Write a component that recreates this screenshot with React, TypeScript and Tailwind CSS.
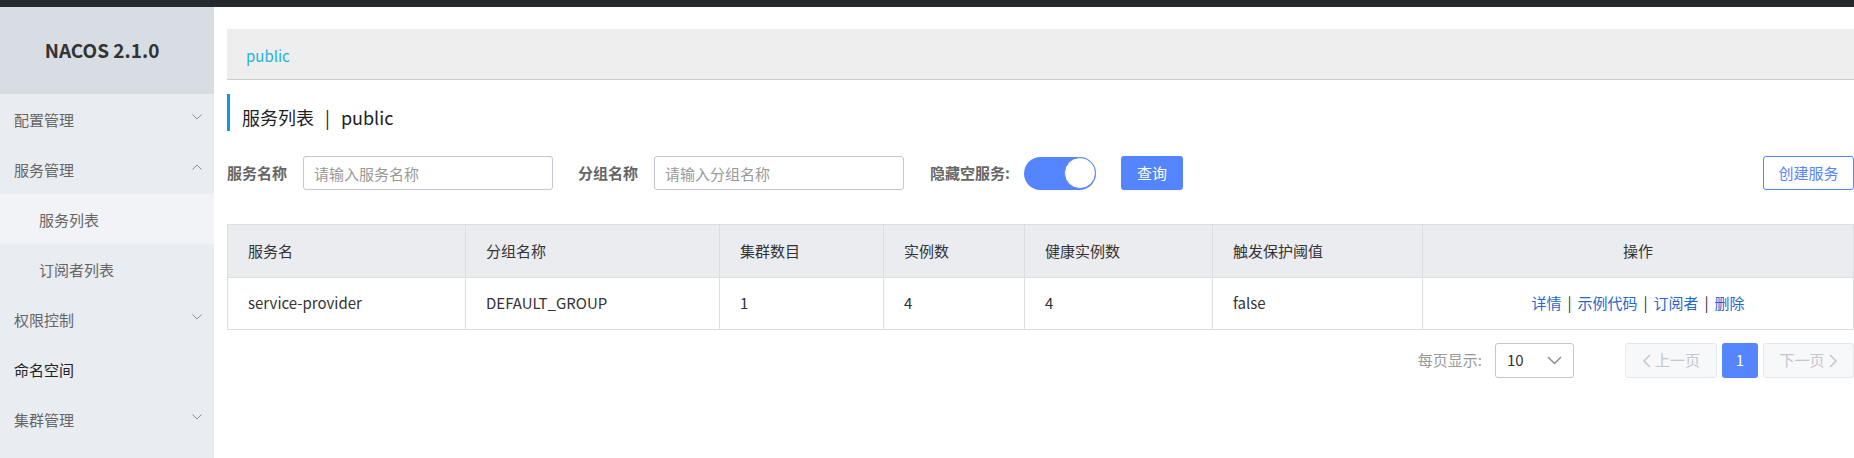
import React from 'react';

const FONT = '"Noto Sans CJK SC", "Noto Sans", sans-serif';

const Chevron = ({ up = false }: { up?: boolean }) => (
  <svg width="10" height="6" viewBox="0 0 10 6" className="text-[#8a8f99]">
    <path d={up ? 'M0.5 5.5 L5 1 L9.5 5.5' : 'M0.5 0.5 L5 5 L9.5 0.5'} fill="none" stroke="currentColor" strokeWidth="1" />
  </svg>
);

const menu = [
  { label: '配置管理', arrow: 'down' },
  { label: '服务管理', arrow: 'up' },
  { label: '服务列表', sub: true, active: true },
  { label: '订阅者列表', sub: true },
  { label: '权限控制', arrow: 'down' },
  { label: '命名空间', dark: true },
  { label: '集群管理', arrow: 'down' },
];

const Sidebar = () => (
  <aside className="w-[214px] shrink-0 bg-[#e9ecf1] self-stretch">
    <div className="h-[87px] bg-[#d8dde4] flex items-center justify-center text-[19px] font-bold text-[#333] pr-[10px]">
      NACOS 2.1.0
    </div>
    {menu.map((m) => (
      <div
        key={m.label}
        className={`h-[50px] flex items-center justify-between text-[15px] pt-[3px] ${m.sub ? 'pl-[39px]' : 'pl-[14px]'} pr-[12px] ${m.active ? 'bg-[#f2f3f7]' : ''} ${m.dark ? 'text-[#222]' : 'text-[#666]'}`}
      >
        <span>{m.label}</span>
        {m.arrow && (
          <span className="-mt-[7px]">
            <Chevron up={m.arrow === 'up'} />
          </span>
        )}
      </div>
    ))}
  </aside>
);

const cols = [
  { t: '服务名', w: 238 },
  { t: '分组名称', w: 254 },
  { t: '集群数目', w: 164 },
  { t: '实例数', w: 141 },
  { t: '健康实例数', w: 188 },
  { t: '触发保护阈值', w: 210 },
];

const row = ['service-provider', 'DEFAULT_GROUP', '1', '4', '4', 'false'];

const Input = ({ ph }: { ph: string }) => (
  <input
    placeholder={ph}
    className="w-[250px] h-[34px] border border-[#c4c6cf] rounded-[3px] px-[10px] text-[15px] placeholder:text-[#999] outline-none"
    style={{ fontFamily: FONT }}
  />
);

const Sep = () => <span className="mx-[6px] text-[#333]">|</span>;

export default function App() {
  return (
    <div className="w-[1854px] h-[458px] overflow-hidden bg-white flex flex-col" style={{ fontFamily: FONT }}>
      <div className="h-[7px] bg-[#24292e] shrink-0" />
      <div className="flex flex-1 min-h-0">
        <Sidebar />
        <main className="flex-1 pl-[13px] pt-[22px] flex flex-col">
          <div className="h-[51px] bg-[#eeeeee] border-b border-[#cccccc] flex items-center pl-[19px] pt-[4px] text-[15px] text-[#1fb3d9]">
            public
          </div>

          <div className="mt-[14px] h-[37px] border-l-[3px] border-[#0c9bd4] pl-[12px] pt-[10px] flex items-center text-[18px] text-[#222]">
            <span>服务列表</span>
            <span className="mx-[11px]">|</span>
            <span>public</span>
          </div>

          <div className="mt-[25px] flex items-center h-[34px] text-[15px]">
            <span className="font-bold text-[#666]">服务名称</span>
            <span className="ml-[16px]"><Input ph="请输入服务名称" /></span>
            <span className="ml-[25px] font-bold text-[#666]">分组名称</span>
            <span className="ml-[16px]"><Input ph="请输入分组名称" /></span>
            <span className="ml-[26px] font-bold text-[#666]">隐藏空服务:</span>
            <div className="ml-[14px] w-[72px] h-[33px] rounded-full bg-[#5584ff] flex items-center justify-end">
              <div className="w-[32px] h-[32px] rounded-full bg-white border border-[#5584ff]" />
            </div>
            <button className="ml-[25px] w-[62px] h-[34px] rounded-[3px] bg-[#5584ff] text-white text-[15px]">查询</button>
            <button className="ml-auto w-[91px] h-[34px] rounded-[3px] border border-[#5584ff] text-[#5584ff] text-[15px] bg-white">
              创建服务
            </button>
          </div>

          <table className="mt-[34px] w-full border-collapse border border-[#dcdee3] text-[15px] table-fixed">
            <colgroup>
              {cols.map((c) => (
                <col key={c.t} style={{ width: c.w }} />
              ))}
              <col />
            </colgroup>
            <thead>
              <tr className="h-[53px] bg-[#ebecf0] text-[#333]">
                {cols.map((c) => (
                  <th key={c.t} className="font-normal text-left pl-[20px] border-r border-b border-[#dcdee3]">
                    {c.t}
                  </th>
                ))}
                <th className="font-normal text-center border-b border-[#dcdee3]">操作</th>
              </tr>
            </thead>
            <tbody>
              <tr className="h-[52px] text-[#333]">
                {row.map((v, i) => (
                  <td key={i} className="pl-[20px] border-r border-[#dcdee3]">
                    {v}
                  </td>
                ))}
                <td className="text-center">
                  <a className="text-[#2767cd]">详情</a>
                  <Sep />
                  <a className="text-[#2767cd]">示例代码</a>
                  <Sep />
                  <a className="text-[#2767cd]">订阅者</a>
                  <Sep />
                  <a className="text-[#2767cd]">删除</a>
                </td>
              </tr>
            </tbody>
          </table>

          <div className="mt-[13px] flex items-center justify-end text-[15px]">
            <span className="text-[#999]">每页显示:</span>
            <div className="ml-[13px] w-[79px] h-[35px] border border-[#c4c6cf] rounded-[3px] flex items-center justify-between pl-[11px] pr-[11px] text-[#333]">
              <span>10</span>
              <svg width="15" height="9" viewBox="0 0 15 9">
                <path d="M1 1 L7.5 7.5 L14 1" fill="none" stroke="#888" strokeWidth="1.4" />
              </svg>
            </div>
            <button className="ml-[51px] w-[92px] h-[35px] rounded-[3px] border border-[#e6e7eb] bg-[#f7f8fa] text-[#c4c6cf] flex items-center justify-center gap-[4px]">
              <svg width="9" height="14" viewBox="0 0 9 14">
                <path d="M8 1 L2 7 L8 13" fill="none" stroke="#c4c6cf" strokeWidth="1.5" />
              </svg>
              上一页
            </button>
            <button className="ml-[5px] w-[36px] h-[35px] rounded-[3px] bg-[#5584ff] text-white">1</button>
            <button className="ml-[5px] w-[91px] h-[35px] rounded-[3px] border border-[#e6e7eb] bg-[#f7f8fa] text-[#c4c6cf] flex items-center justify-center gap-[4px]">
              下一页
              <svg width="9" height="14" viewBox="0 0 9 14">
                <path d="M1 1 L7 7 L1 13" fill="none" stroke="#c4c6cf" strokeWidth="1.5" />
              </svg>
            </button>
          </div>
        </main>
      </div>
    </div>
  );
}
